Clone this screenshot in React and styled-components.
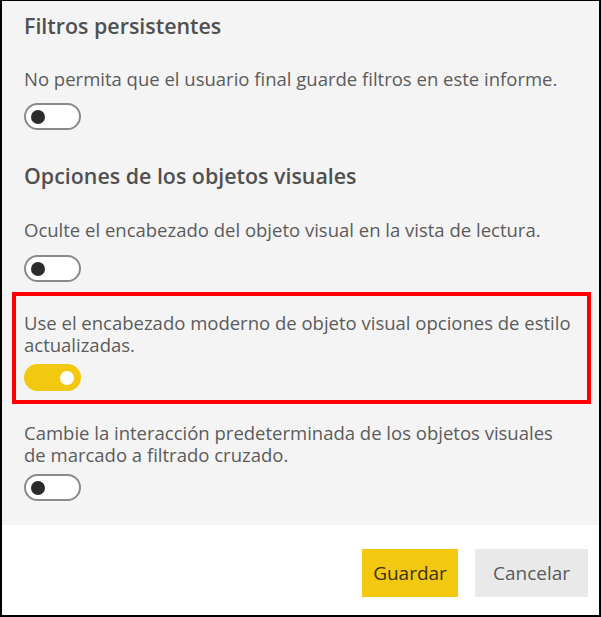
import React, { useState } from "react";
import styled, { createGlobalStyle } from "styled-components";

const Global = createGlobalStyle`
  html, body { margin: 0; padding: 0; background: #ffffff; }
  * { box-sizing: border-box; }
`;

const Frame = styled.div`
  width: 601px;
  height: 617px;
  border: 2px solid #000;
  border-top-width: 1px;
  display: flex;
  flex-direction: column;
  font-family: "Open Sans", "Noto Sans", sans-serif;
  background: #fff;
`;

const Body = styled.div`
  height: 524px;
  background: #f4f4f4;
  padding: 12px 0 0 0;
  display: flex;
  flex-direction: column;
`;

const Heading = styled.h2`
  margin: ${(p) => p.$mt}px 0 0 22px;
  font-size: 21.4px;
  line-height: 26px;
  font-weight: 600;
  color: #505050;
`;

const Option = styled.div`
  margin: ${(p) => p.$mt}px ${(p) => (p.$highlight ? 8 : 0)}px 0 ${(p) => (p.$highlight ? 10 : 0)}px;
  padding: ${(p) => (p.$highlight ? "16px 0 9px 8px" : "0 0 0 22px")};
  border: ${(p) => (p.$highlight ? "4px solid #ff0000" : "none")};
  display: flex;
  flex-direction: column;
  align-items: flex-start;
`;

const Label = styled.p`
  margin: 0;
  font-size: 18.5px;
  line-height: 22px;
  color: #5b5b5b;
  max-width: ${(p) => p.$max || 560}px;
`;

const Track = styled.button`
  margin-top: ${(p) => p.$mt}px;
  width: 57px;
  height: 27px;
  border-radius: 14px;
  border: ${(p) => (p.$on ? "none" : "2px solid #8a8a8a")};
  background: ${(p) => (p.$on ? "#f2c811" : "#ffffff")};
  display: flex;
  align-items: center;
  justify-content: ${(p) => (p.$on ? "flex-end" : "flex-start")};
  padding: ${(p) => (p.$on ? "0 7px" : "0 5px")};
  cursor: pointer;
`;

const Knob = styled.span`
  width: 14px;
  height: 14px;
  border-radius: 50%;
  background: ${(p) => (p.$on ? "#ffffff" : "#2b2b2b")};
`;

const Footer = styled.div`
  flex: 1;
  display: flex;
  justify-content: flex-end;
  align-items: flex-start;
  gap: 17px;
  padding: 24px 11px 0 0;
`;

const Button = styled.button`
  height: 48px;
  padding: 0;
  width: ${(p) => p.$w}px;
  border: none;
  background: ${(p) => (p.$primary ? "#f2c811" : "#e9e9e9")};
  color: ${(p) => (p.$primary ? "#3b3216" : "#5a5a5a")};
  font-family: "Open Sans", "Noto Sans", sans-serif;
  font-size: 19px;
  cursor: pointer;
`;

function Toggle({ on, mt, onClick }) {
  return (
    <Track $on={on} $mt={mt} onClick={onClick} aria-pressed={on}>
      <Knob $on={on} />
    </Track>
  );
}

export default function App() {
  const [s, setS] = useState([false, false, true, false]);
  const flip = (i) => setS((v) => v.map((x, j) => (j === i ? !x : x)));
  return (
    <>
      <Global />
      <Frame>
        <Body>
          <Heading $mt={0}>Filtros persistentes</Heading>
          <Option $mt={29}>
            <Label>No permita que el usuario final guarde filtros en este informe.</Label>
            <Toggle on={s[0]} mt={13} onClick={() => flip(0)} />
          </Option>
          <Heading $mt={33}>Opciones de los objetos visuales</Heading>
          <Option $mt={30}>
            <Label>Oculte el encabezado del objeto visual en la vista de lectura.</Label>
            <Toggle on={s[1]} mt={14} onClick={() => flip(1)} />
          </Option>
          <Option $mt={10} $highlight>
            <Label>Use el encabezado moderno de objeto visual opciones de estilo actualizadas.</Label>
            <Toggle on={s[2]} mt={8} onClick={() => flip(2)} />
          </Option>
          <Option $mt={18}>
            <Label $max={545}>Cambie la interacción predeterminada de los objetos visuales de marcado a filtrado cruzado.</Label>
            <Toggle on={s[3]} mt={8} onClick={() => flip(3)} />
          </Option>
        </Body>
        <Footer>
          <Button $primary $w={96}>Guardar</Button>
          <Button $w={113}>Cancelar</Button>
        </Footer>
      </Frame>
    </>
  );
}
